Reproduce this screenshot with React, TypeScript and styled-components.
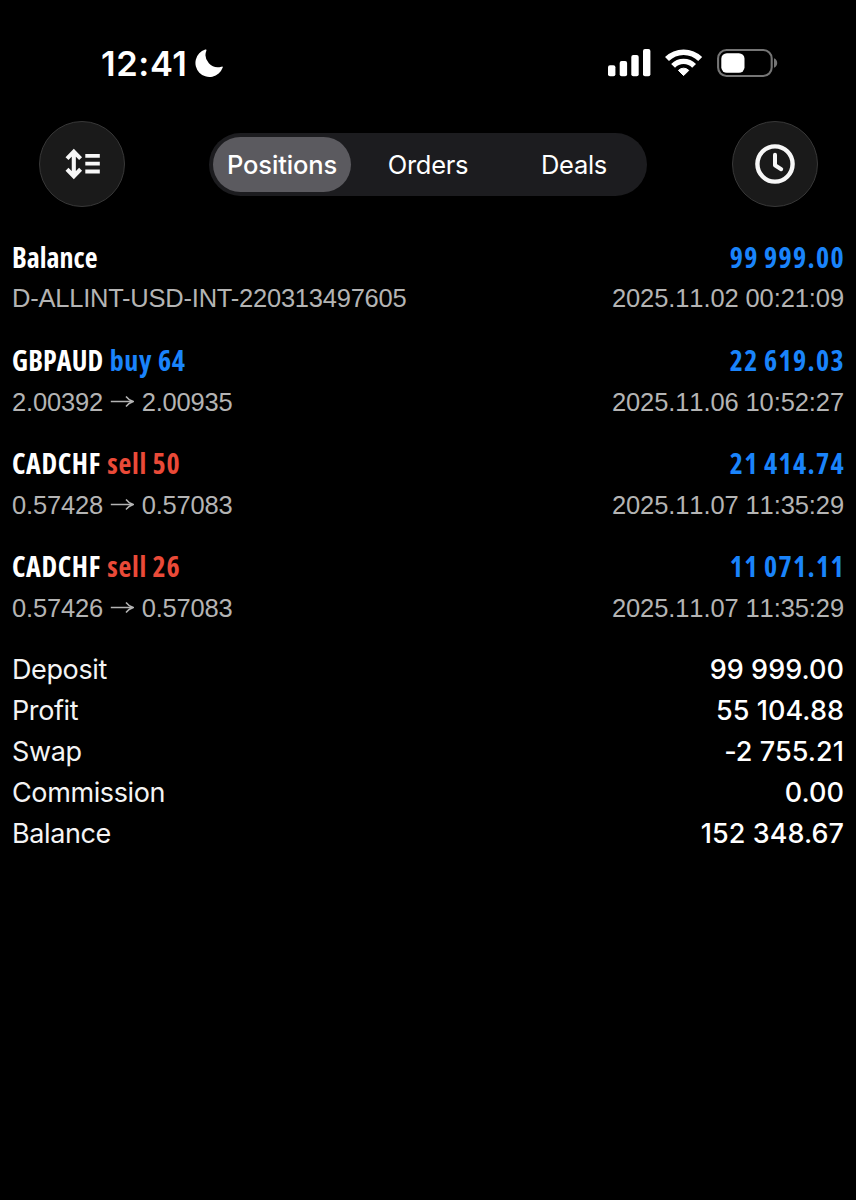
import React from "react";
import styled, { createGlobalStyle } from "styled-components";

const Global = createGlobalStyle`
  * { box-sizing: border-box; }
  body { margin: 0; background: #000; color: #fff; font-family: Inter, sans-serif; }
`;

const Screen = styled.main`
  width: 856px;
  height: 1200px;
  background: #000;
  overflow: hidden;
`;

const StatusBar = styled.header`
  display: flex;
  justify-content: space-between;
  align-items: center;
  height: 86px;
  padding: 40px 78px 0 101px;
`;

const StatusGroup = styled.div<{ $gap: number }>`
  display: flex;
  align-items: center;
  gap: ${(p) => p.$gap}px;
`;

const Clock = styled.span`
  padding-top: 2px;
  font-size: 34.5px;
  line-height: 46px;
  font-weight: 580;
  letter-spacing: 0.6px;
`;

const Toolbar = styled.nav`
  display: flex;
  justify-content: space-between;
  align-items: center;
  height: 86px;
  margin-top: 35px;
  padding: 0 38px 0 39px;
`;

const RoundButton = styled.button`
  display: flex;
  align-items: center;
  justify-content: center;
  width: 86px;
  height: 86px;
  padding: 0;
  border: 1.5px solid #383838;
  border-radius: 50%;
  background: #1a1a1a;
  color: #f7f7f7;
`;

const Segmented = styled.div`
  display: flex;
  gap: 8px;
  width: 438px;
  height: 63px;
  margin-left: -1px;
  padding: 4px;
  border-radius: 32px;
  background: #1c1c1f;
`;

const Segment = styled.button<{ $active?: boolean }>`
  width: 138px;
  height: 55px;
  padding: 1px 0 0;
  border: 0;
  border-radius: 28px;
  background: ${(p) => (p.$active ? "#5b5a5f" : "transparent")};
  color: #fff;
  font: ${(p) => (p.$active ? 500 : 440)} 25.5px Inter, sans-serif;
  letter-spacing: ${(p) => (p.$active ? -0.15 : -0.3)}px;
`;

const Deals = styled.section`
  display: flex;
  flex-direction: column;
  gap: 21.15px;
  padding: 30px 12px 0;
`;

const Line = styled.div`
  display: flex;
  justify-content: space-between;
  height: 41px;
  line-height: 41px;
  white-space: pre;
`;

const Heading = styled(Line)`
  font-family: "Open Sans", sans-serif;
  font-size: 28px;
  font-weight: 700;
  font-stretch: 75%;
`;

const Name = styled.span<{ $tracking: number }>`
  letter-spacing: ${(p) => p.$tracking}px;
`;

const Side = styled.span<{ $side: "buy" | "sell" }>`
  margin-left: 6.4px;
  color: ${(p) => (p.$side === "buy" ? "#1a84fb" : "#ea4a38")};
  letter-spacing: 0.7px;
`;

const Amount = styled.span`
  color: #1a84fb;
  letter-spacing: 1.35px;
  word-spacing: -1px;
  margin-right: -1px;
`;

const Detail = styled(Line)`
  align-items: flex-start;
  padding-top: 0.4px;
  color: #b4b4b4;
  font-family: "Liberation Sans", Arial, sans-serif;
  font-size: 25.5px;
  font-kerning: none;
`;

const Note = styled.span`
  font-kerning: normal;
  letter-spacing: -0.23px;
`;

const Prices = styled.span`
  display: flex;
  gap: 7.4px;
  letter-spacing: -0.18px;

  svg {
    margin-top: 14px;
  }
`;

const Time = styled.span`
  letter-spacing: -0.1px;
`;

const Totals = styled.section`
  padding: 20.55px 12px 0;
  font-size: 27px;
`;

const Label = styled.span`
  color: #f4f4f4;
  letter-spacing: -0.38px;
`;

const Value = styled.span`
  font-weight: 470;
  letter-spacing: 0.05px;
`;

const Moon = () => (
  <svg width="30" height="30" viewBox="194 48.5 30 30" fill="#fff">
    <path d="M205.2 50.1Q206.8 49.4 206.4 51A12.3 12.3 0 0 0 221.4 67.2Q223.4 66.4 222.6 68.2A14 14 0 1 1 205.2 50.1Z" />
  </svg>
);

const Signal = () => (
  <svg width="43" height="28" viewBox="608 49 43 28" fill="#fff">
    <rect x="608" y="65.2" width="7.4" height="11" rx="2" />
    <rect x="619.7" y="61" width="7.4" height="15.2" rx="2" />
    <rect x="631.3" y="55" width="7.4" height="21.2" rx="2" />
    <rect x="643" y="49" width="7.4" height="27.2" rx="2" />
  </svg>
);

const Wifi = () => (
  <svg width="38" height="28" viewBox="665 49 38 28" fill="none" stroke="#fff">
    <path d="M667 59.1A23.6 23.6 0 0 1 700.2 59.1" strokeWidth="5.6" />
    <path d="M673.1 65.8A14.7 14.7 0 0 1 694.1 65.8" strokeWidth="5.4" />
    <path
      d="M683.6 75.6L678.4 70.4A7.2 7.2 0 0 1 688.8 70.4Z"
      fill="#fff"
      strokeWidth="1"
      strokeLinejoin="round"
    />
  </svg>
);

const Battery = () => (
  <svg width="61" height="30" viewBox="717 48 61 30">
    <rect x="718.1" y="50" width="53.6" height="26" rx="8.4" fill="none" stroke="#757575" strokeWidth="2.1" />
    <rect x="721.3" y="53.2" width="23.2" height="19.6" rx="5.6" fill="#fff" />
    <path d="M774 58.2C778.3 60 778.3 66 774 67.8Z" fill="#757575" />
  </svg>
);

const SortIcon = () => (
  <svg width="38" height="34" viewBox="63 147 38 34" fill="none" stroke="currentColor" strokeWidth="4.1">
    <path d="M73.8 152V176M67 158.6L73.8 151.6L80.6 158.6M67 169.2L73.8 176.2L80.6 169.2" />
    <path d="M85.3 155.9H99.8M85.3 163.7H99.8M85.3 171.5H99.8" strokeWidth="3.8" />
  </svg>
);

const HistoryIcon = () => (
  <svg width="42" height="42" viewBox="-21 -21 42 42" fill="none" stroke="currentColor" strokeLinecap="round" strokeLinejoin="round">
    <circle r="17.6" strokeWidth="4.4" />
    <path d="M0 -9.2V1.2L6.2 5.2" strokeWidth="4" />
  </svg>
);

const Arrow = () => (
  <svg width="24" height="14" viewBox="0 0 24 14" fill="none" stroke="currentColor" strokeWidth="1.4">
    <path d="M.8 5.5H22.8M16 .5Q18.4 3.9 23.3 5.5Q18.4 7.1 16 10.5" />
  </svg>
);

type Deal = {
  name: string;
  tracking: number;
  side?: "buy" | "sell";
  volume?: number;
  amount: string;
  note?: string;
  open?: string;
  close?: string;
  time: string;
};

const deals: Deal[] = [
  { name: "Balance", tracking: 0, amount: "99 999.00", note: "D-ALLINT-USD-INT-220313497605", time: "2025.11.02 00:21:09" },
  { name: "GBPAUD", tracking: 0.1, side: "buy", volume: 64, amount: "22 619.03", open: "2.00392", close: "2.00935", time: "2025.11.06 10:52:27" },
  { name: "CADCHF", tracking: 0.6, side: "sell", volume: 50, amount: "21 414.74", open: "0.57428", close: "0.57083", time: "2025.11.07 11:35:29" },
  { name: "CADCHF", tracking: 0.6, side: "sell", volume: 26, amount: "11 071.11", open: "0.57426", close: "0.57083", time: "2025.11.07 11:35:29" },
];

const totals = [
  ["Deposit", "99 999.00"],
  ["Profit", "55 104.88"],
  ["Swap", "-2 755.21"],
  ["Commission", "0.00"],
  ["Balance", "152 348.67"],
];

export default function App() {
  return (
    <>
      <Global />
      <Screen>
        <StatusBar>
          <StatusGroup $gap={6.5}>
            <Clock>12:41</Clock>
            <Moon />
          </StatusGroup>
          <StatusGroup $gap={14}>
            <Signal />
            <Wifi />
            <Battery />
          </StatusGroup>
        </StatusBar>
        <Toolbar>
          <RoundButton aria-label="Sort">
            <SortIcon />
          </RoundButton>
          <Segmented>
            <Segment $active>Positions</Segment>
            <Segment>Orders</Segment>
            <Segment>Deals</Segment>
          </Segmented>
          <RoundButton aria-label="History period">
            <HistoryIcon />
          </RoundButton>
        </Toolbar>
        <Deals>
          {deals.map((d, i) => (
            <article key={i}>
              <Heading>
                <span>
                  <Name $tracking={d.tracking}>{d.name}</Name>
                  {d.side && <Side $side={d.side}>{`${d.side} ${d.volume}`}</Side>}
                </span>
                <Amount>{d.amount}</Amount>
              </Heading>
              <Detail>
                {d.note ? (
                  <Note>{d.note}</Note>
                ) : (
                  <Prices>
                    <span>{d.open}</span>
                    <Arrow />
                    <span>{d.close}</span>
                  </Prices>
                )}
                <Time>{d.time}</Time>
              </Detail>
            </article>
          ))}
        </Deals>
        <Totals>
          {totals.map(([label, value]) => (
            <Line key={label}>
              <Label>{label}</Label>
              <Value>{value}</Value>
            </Line>
          ))}
        </Totals>
      </Screen>
    </>
  );
}
